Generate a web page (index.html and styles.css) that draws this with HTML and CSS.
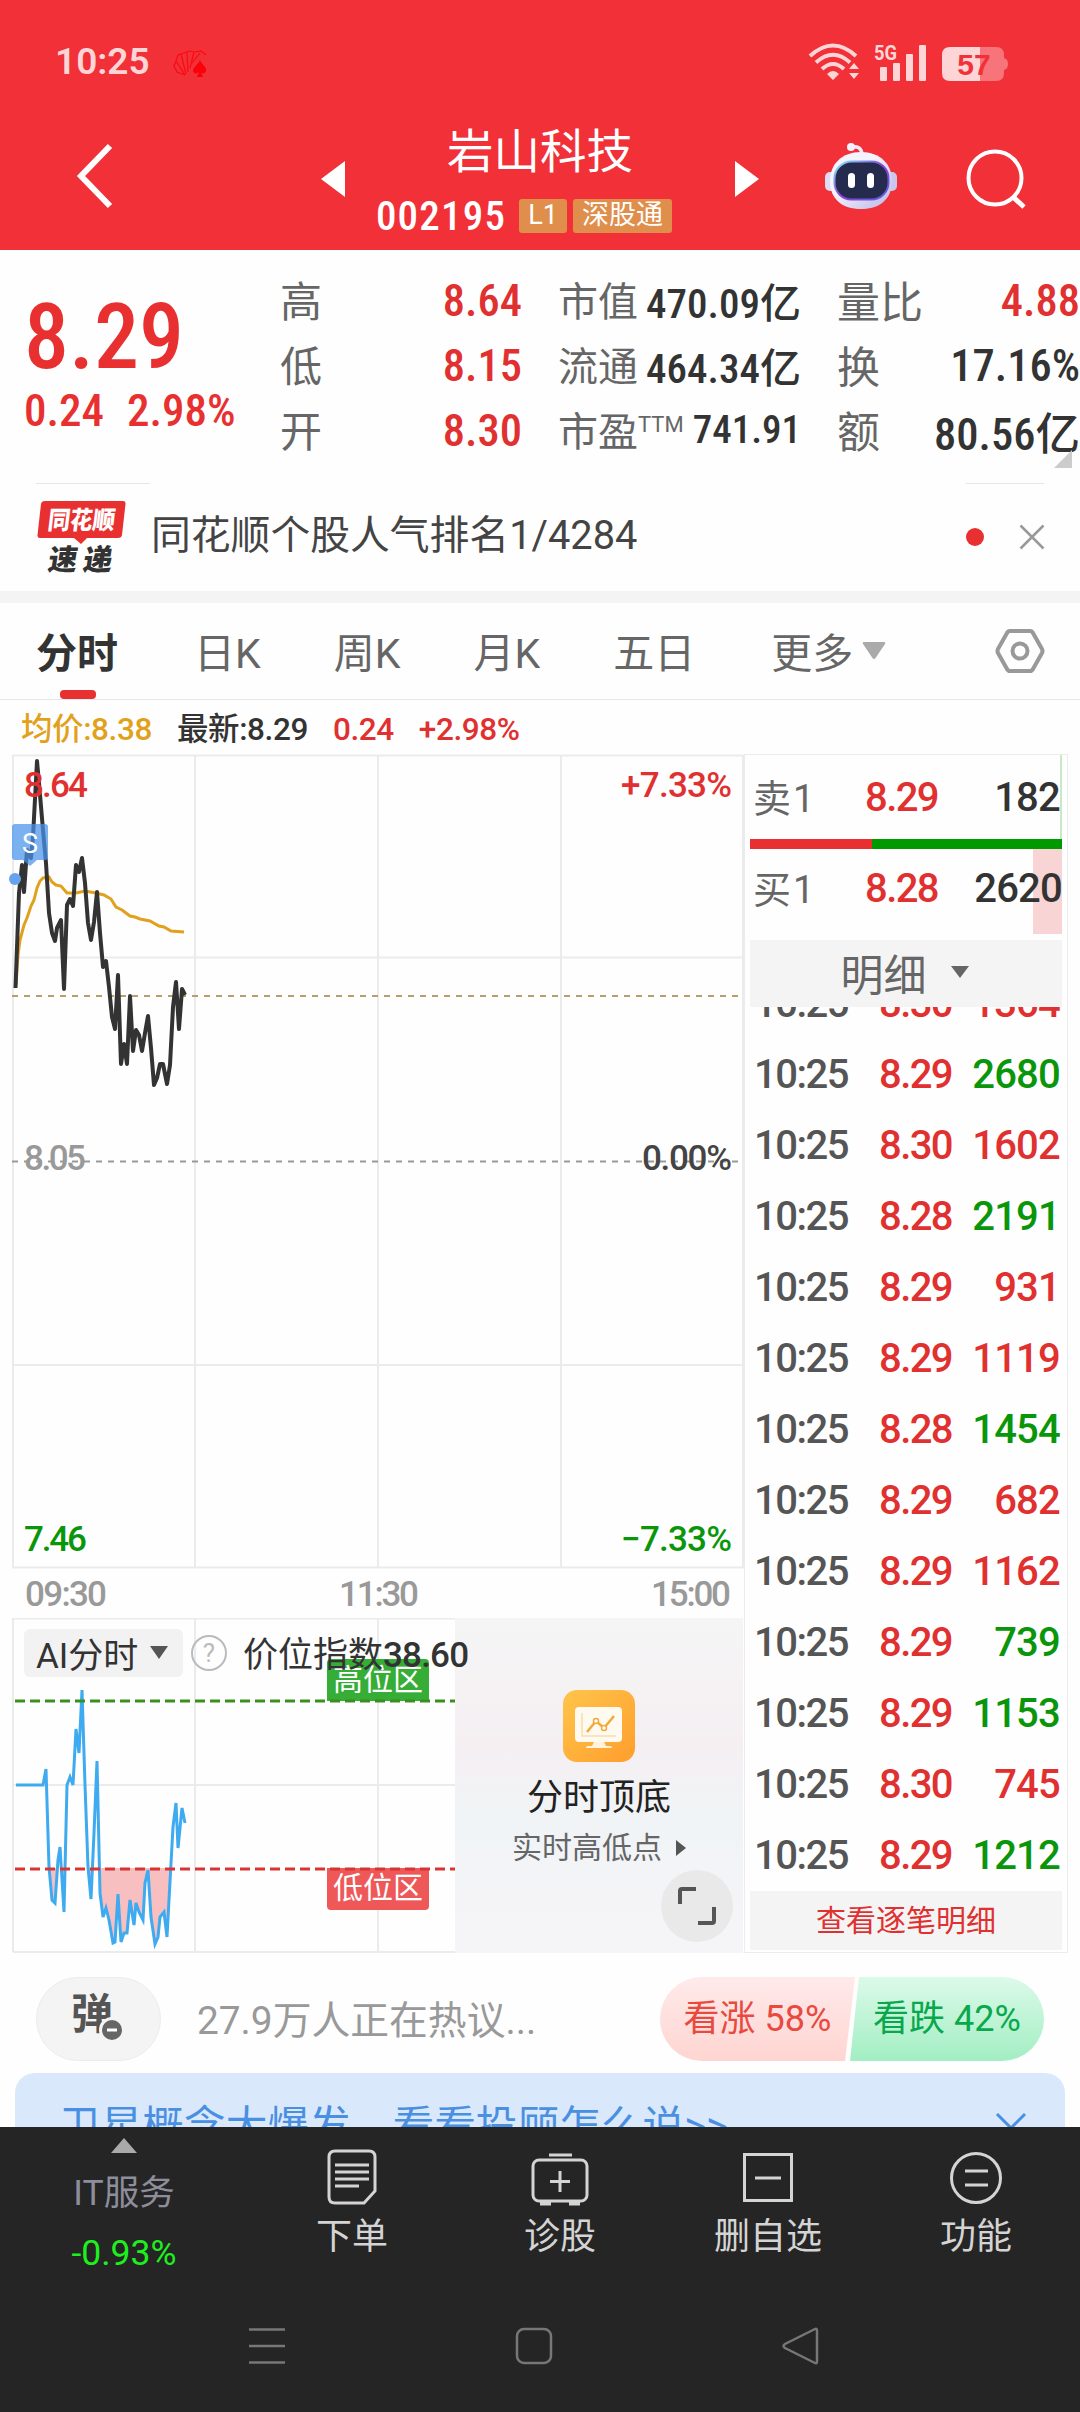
FILE: index.html
```html
<!DOCTYPE html>
<html lang="zh-CN">
<head>
  <meta charset="UTF-8" />
  <meta name="viewport" content="width=device-width, initial-scale=1.0"/>
  <title>岩山科技 002195</title>
  <link rel="stylesheet" href="styles.css">
</head>
<body>

  <!-- Header -->
  <header class="top">
    <div class="status">
      <span class="clock">10:25</span>
      <svg class="shell" width="36" height="28" viewBox="0 0 36 28">
        <path d="M12 25 L4 22 L1 16 L3 11 L5 5 L11 3 L16 1 L22 2 L28 1 L33 5 M12 25 L3 11 M13 24 L8 4 M15 22 L14 2 M17 18 L21 2 M19 13 L27 3" fill="none" stroke="#fb0a10" stroke-width="1.2"/>
        <path d="M27 10 C29 15 34 17 33 21 C32 24 29 24 28 22 L30 27 H24 L26 22 C24 24 21 24 20 21 C20 17 25 15 27 10Z" fill="#fb0008"/>
      </svg>
      <svg class="wifi" width="52" height="38" viewBox="0 0 52 38">
        <g fill="none" stroke="#fdd5d7" stroke-width="4">
          <path d="M2 13 Q25 -8 48 13"/>
          <path d="M8 19.500 Q25 4 42 19.500"/>
          <path d="M14 26 Q25 16 36 26"/>
        </g>
        <path d="M19 31 Q25 25 31 31 L25 37Z M41 26 L46 20 L51 26Z M41 30 H51 L46 36Z" fill="#fdd5d7"/>
      </svg>
      <svg class="signal" width="54" height="38" viewBox="0 0 54 38">
        <text class="net" x="0" y="17" textLength="23" lengthAdjust="spacingAndGlyphs">5G</text>
        <g fill="#fdd5d7">
          <rect x="6" y="24" width="7" height="14" rx="1"/>
          <rect x="19" y="20" width="7" height="18" rx="1"/>
          <rect x="32" y="11" width="7" height="27" rx="1"/>
          <rect x="45" y="2" width="7" height="36" rx="1"/>
        </g>
      </svg>
      <svg class="battery" width="66" height="34" viewBox="0 0 66 34">
        <path d="M38 0 H54 Q62 0 62 8 V11 Q66 12 66 17 Q66 22 62 23 V26 Q62 34 54 34 H38Z" fill="#f7757a"/>
        <path d="M8 0 H38 V34 H8 Q0 34 0 26 V8 Q0 0 8 0Z" fill="#fdd5d7"/>
        <text class="percent" x="32" y="28" text-anchor="middle">57</text>
      </svg>
    </div>

    <div class="titlebar">
      <svg class="back" width="40" height="66" viewBox="0 0 40 66"><path d="M35 3 L6 33 L35 63" fill="none" stroke="#fff" stroke-width="6"/></svg>
      <svg class="prev" width="24" height="36" viewBox="0 0 24 36"><path d="M24 0 V36 L0 18Z" fill="#fff"/></svg>
      <div class="stock">
        <h1>岩山科技</h1>
        <div class="code"><span class="num">002195</span><i class="l1">L1</i><i>深股通</i></div>
      </div>
      <svg class="next" width="24" height="36" viewBox="0 0 24 36"><path d="M0 0 V36 L24 18Z" fill="#fff"/></svg>
      <svg class="robot" width="74" height="68" viewBox="0 0 74 68">
        <defs>
          <linearGradient id="head" x1="0" y1="0" x2="1" y2="1"><stop offset="0.4" stop-color="#f5f3fd"/><stop offset="1" stop-color="#b9b4e6"/></linearGradient>
          <linearGradient id="rim" x1="0" y1="0" x2="1" y2="1"><stop offset="0" stop-color="#7ff0f5"/><stop offset="0.500" stop-color="#8a3fd8"/><stop offset="1" stop-color="#5a62d8"/></linearGradient>
        </defs>
        <path d="M27 5 Q37 3 38 12" fill="none" stroke="#ecebfa" stroke-width="3.500"/>
        <circle cx="27" cy="5" r="4" fill="#f4f2fe"/>
        <rect x="1" y="30" width="12" height="19" rx="5" fill="#dedcf5"/>
        <rect x="61" y="30" width="12" height="19" rx="5" fill="#cac6ee"/>
        <path d="M37 10 C56 10 68 22 68 39 C68 57 56 67 37 67 C18 67 6 57 6 39 C6 22 18 10 37 10Z" fill="url(#head)"/>
        <rect x="10.500" y="19.500" width="54" height="38" rx="17" fill="#242b4c" stroke="url(#rim)" stroke-width="2"/>
        <rect x="24" y="31" width="7" height="15" rx="3.500" fill="#fff"/>
        <rect x="43" y="31" width="7" height="15" rx="3.500" fill="#fff"/>
      </svg>
      <svg class="search" width="62" height="62" viewBox="0 0 62 62"><g fill="none" stroke="#fff" stroke-width="4"><circle cx="29" cy="30" r="26.500"/><path d="M47 49 L58 59" stroke-width="5"/></g></svg>
    </div>
  </header>

  <!-- Quote -->
  <section class="quote">
    <div class="price">
      <div class="now num">8.29</div>
      <div class="change num"><span>0.24</span><span>2.98%</span></div>
    </div>
    <dl class="col-a">
      <dt>高</dt><dd class="num up">8.64</dd>
      <dt>低</dt><dd class="num up">8.15</dd>
      <dt>开</dt><dd class="num up">8.30</dd>
    </dl>
    <dl class="col-b">
      <dt>市值</dt><dd class="num">470.09亿</dd>
      <dt>流通</dt><dd class="num">464.34亿</dd>
      <dt>市盈<sup>TTM</sup></dt><dd class="num pe">741.91</dd>
    </dl>
    <dl class="col-c">
      <dt>量比</dt><dd class="num up">4.88</dd>
      <dt>换</dt><dd class="num">17.16%</dd>
      <dt>额</dt><dd class="num">80.56亿</dd>
    </dl>
    <i class="corner"></i>
  </section>

  <!-- News -->
  <section class="news">
    <div class="rules"><i></i><i></i></div>
    <div class="news-row">
      <svg class="logo" width="90" height="72" viewBox="0 0 90 72">
        <path d="M8 0 H86 Q89 0 88.500 3 L85 34 Q84.500 37 81 37 H50 L44 43 L37 37 H3 Q0 37 0.500 34 L4 3 Q4.500 0 8 0Z" fill="#e93030"/>
        <text class="brand" x="0" y="0" transform="translate(10 28) skewX(-7)" textLength="67" lengthAdjust="spacingAndGlyphs">同花顺</text>
        <text class="express" x="0" y="0" transform="translate(10 69) skewX(-9)" textLength="64">速递</text>
      </svg>
      <p>同花顺个股人气排名1/4284</p>
      <i class="dot"></i>
      <svg width="26" height="26" viewBox="0 0 26 26"><path d="M1.500 1.500 L24.500 24.500 M24.500 1.500 L1.500 24.500" stroke="#999" stroke-width="2.500"/></svg>
    </div>
  </section>

  <!-- Tabs -->
  <nav class="tabs">
    <span class="active">分时</span>
    <span>日K</span>
    <span>周K</span>
    <span>月K</span>
    <span>五日</span>
    <span class="more">更多</span>
    <svg class="caret" width="24" height="18" viewBox="0 0 24 18"><path d="M2 0 H22 Q24 0 23 2 L13.500 16 Q12 18 10.500 16 L1 2 Q0 0 2 0Z" fill="#aaa"/></svg>
    <svg class="hex" width="50" height="46" viewBox="0 0 50 46"><g fill="none" stroke="#999" stroke-width="4"><path d="M15 3 H35 Q37 3 38 5 L47 21 Q48 23 47 25 L38 41 Q37 43 35 43 H15 Q13 43 12 41 L3 25 Q2 23 3 21 L12 5 Q13 3 15 3Z"/><circle cx="25" cy="23" r="7.500"/></g></svg>
  </nav>

  <main class="board">
    <div class="charts">
      <div class="legend">
        <span class="avg">均价:8.38</span><span>最新:8.29</span><span class="up">0.24</span><span class="up">+2.98%</span>
      </div>

      <!-- intraday line -->
      <svg class="line" width="744" height="864" viewBox="0 754 744 864">
        <g class="grid">
          <rect x="13" y="755.500" width="730" height="812"/>
          <path d="M195 755 V1568 M378 755 V1568 M561 755 V1568 M13 957.500 H743 M13 1365 H743"/>
        </g>
        <path d="M12 996 H743" stroke="#b5a06c" stroke-width="2" stroke-dasharray="6 6"/>
        <path d="M12 1161.500 H743" stroke="#999" stroke-width="2" stroke-dasharray="6 6"/>
        <polyline fill="none" stroke="#e2a11c" stroke-width="3" points="16,985 17,970 18,955 20,940 24,925 27,918 31,906 34,900 37,888 40,881 43,878 49,877 52,882 56,885 61,886 67,893 76,893 85,891 96,893 104,895 111,899 116,907 122,910 130,916 135,917 140,919 150,921 159,926 164,927 171,931 184,932"/>
        <polyline fill="none" stroke="#333" stroke-width="4" stroke-linejoin="round" points="15.500,988 19,893 22,865 24,892 27,850 31,858 33,837 37,761 39,783 43,830 46,863 49,913 52,933 55,941 57,928 61,920 64,989 67,905 70,899 73,906 76,865 79,872 82,858 85,883 88,923 91,940 94,922 97,892 100,933 103,967 106,961 109,987 112,1017 115,1029 118,975 121,1064 124,1044 127,1064 130,996 133,1051 136,1030 139,1035 142,1051 145,1033 148,1016 151,1048 154,1085 157,1078 160,1064 163,1064 167,1084 170,1065 173,1007 176,982 179,1029 182,989 185,995"/>
        <g class="axis">
          <text x="24" y="797" fill="#e03030" textLength="64">8.64</text>
          <text x="621" y="797" fill="#e03030" textLength="111">+7.33%</text>
          <text x="24" y="1170" fill="#999" textLength="62">8.05</text>
          <text x="642" y="1170" fill="#444" textLength="90">0.00%</text>
          <text x="24" y="1551" fill="#0a960a" textLength="63">7.46</text>
          <text x="621" y="1551" fill="#0a960a" textLength="111">−7.33%</text>
          <text x="25" y="1606" fill="#999" textLength="82">09:30</text>
          <text x="339" y="1606" fill="#999" textLength="80">11:30</text>
          <text x="651" y="1606" fill="#999" textLength="80">15:00</text>
        </g>
        <path d="M15 824 H45 Q48 824 48 827 V857 Q48 860 45 860 H37 L30 866 L23 860 H15 Q12 860 12 857 V827 Q12 824 15 824Z" fill="#4a93ec" fill-opacity="0.720"/>
        <text class="sell" x="30" y="853" text-anchor="middle">S</text>
        <circle cx="15" cy="879" r="6" fill="#66a3ee"/>
      </svg>

      <!-- AI index -->
      <div class="ai">
        <svg class="ai-line" width="455" height="336" viewBox="0 1618 455 336">
          <defs><clipPath id="low"><rect x="0" y="1868" width="455" height="90"/></clipPath></defs>
          <g class="grid">
            <path d="M13 1618.500 H455 M13 1785 H455 M13 1952 H455 M13 1618 V1952 M195 1618 V1952 M378 1618 V1952"/>
          </g>
          <polygon clip-path="url(#low)" fill="#f7bfc0" points="46,1769 49,1867 52,1900 55,1903 58,1860 60,1847 64,1912 67,1785 85,1785 88,1867 91,1899 94,1833 97,1761 100,1893 103,1917 106,1908 109,1920 113,1943 115,1942 118,1894 121,1942 124,1933 127,1933 130,1900 134,1925 136,1903 139,1912 143,1920 145,1883 148,1870 151,1917 155,1944 158,1937 160,1917 164,1912 167,1937 169,1900 173,1827"/>
          <polyline fill="none" stroke="#3eaaf0" stroke-width="3" points="16,1785 43,1785 46,1769 49,1867 52,1900 55,1903 58,1860 60,1847 64,1912 67,1785 70,1777 73,1785 76,1729 79,1753 82,1690 85,1785 88,1867 91,1899 94,1833 97,1761 100,1893 103,1917 106,1908 109,1920 113,1943 115,1942 118,1894 121,1942 124,1933 127,1933 130,1900 134,1925 136,1903 139,1912 143,1920 145,1883 148,1870 151,1917 155,1944 158,1937 160,1917 164,1912 167,1937 169,1900 173,1827 176,1803 178,1848 182,1808 185,1823"/>
          <path d="M327 1701 V1663 Q327 1659 331 1659 H425 Q429 1659 429 1663 V1701Z" fill="#36ad36"/>
          <path d="M327 1868 V1906 Q327 1910 331 1910 H425 Q429 1910 429 1906 V1868Z" fill="#ee5858"/>
          <path d="M15 1701 H455" stroke="#3a8f1e" stroke-width="3" stroke-dasharray="10 5"/>
          <path d="M15 1869 H455" stroke="#d93434" stroke-width="3" stroke-dasharray="10 5"/>
          <text class="zone" x="378" y="1690" text-anchor="middle">高位区</text>
          <text class="zone" x="378" y="1898" text-anchor="middle">低位区</text>
        </svg>
        <div class="ai-head">
          <span class="picker">AI分时<svg width="20" height="13" viewBox="0 0 20 13"><path d="M1 0 H19 L10 13Z" fill="#555"/></svg></span>
          <span class="help">?</span>
          <span class="index">价位指数<b>38.60</b></span>
        </div>
        <div class="promo">
          <svg width="72" height="72" viewBox="0 0 72 72">
            <defs><linearGradient id="gold" x1="0" y1="0" x2="1" y2="1"><stop offset="0" stop-color="#ffc54a"/><stop offset="1" stop-color="#ff9d2e"/></linearGradient></defs>
            <rect width="72" height="72" rx="14" fill="url(#gold)"/>
            <rect x="12" y="17" width="47" height="35" rx="4" fill="#fffaf0"/>
            <path d="M31 52 H41 L43 56 H47 Q49 56 49 58 H23 Q23 56 25 56 H29Z" fill="#fff3dd"/>
            <path d="M19 23 V46 H53" fill="none" stroke="#fbdcae" stroke-width="1.500"/>
            <path d="M24 42 L33 31 L41 38 L51 26" fill="none" stroke="#f0a93a" stroke-width="2.500"/>
            <circle cx="33" cy="31" r="2.500" fill="#fff" stroke="#f0a93a" stroke-width="1.500"/>
            <circle cx="41" cy="38" r="2.500" fill="#fff" stroke="#f0a93a" stroke-width="1.500"/>
          </svg>
          <strong>分时顶底</strong>
          <span>实时高低点<svg width="10" height="18" viewBox="0 0 10 18"><path d="M0 1 L10 9 L0 17Z" fill="#555"/></svg></span>
          <i class="expand"><svg width="40" height="40" viewBox="0 0 40 40"><path d="M3 18 V5 Q3 3 5 3 H19 M37 21 V35 Q37 37 35 37 H21" fill="none" stroke="#555" stroke-width="4"/></svg></i>
        </div>
      </div>
    </div>

    <!-- Order book and ticks -->
    <aside class="book">
      <div class="level sell1"><span>卖1</span><b class="up">8.29</b><b>182</b></div>
      <div class="ratio"><i></i></div>
      <div class="level buy1"><span>买1</span><b class="up">8.28</b><b>2620</b></div>
      <div class="detail">明细<svg width="18" height="12" viewBox="0 0 18 12"><path d="M0 0 H18 L9 12Z" fill="#666"/></svg></div>
      <div class="ticks">
        <p class="cut"><span>10:25</span><b>8.30</b><b>1364</b></p>
        <p><span>10:25</span><b>8.29</b><b class="down">2680</b></p>
        <p><span>10:25</span><b>8.30</b><b>1602</b></p>
        <p><span>10:25</span><b>8.28</b><b class="down">2191</b></p>
        <p><span>10:25</span><b>8.29</b><b>931</b></p>
        <p><span>10:25</span><b>8.29</b><b>1119</b></p>
        <p><span>10:25</span><b>8.28</b><b class="down">1454</b></p>
        <p><span>10:25</span><b>8.29</b><b>682</b></p>
        <p><span>10:25</span><b>8.29</b><b>1162</b></p>
        <p><span>10:25</span><b>8.29</b><b class="down">739</b></p>
        <p><span>10:25</span><b>8.29</b><b class="down">1153</b></p>
        <p><span>10:25</span><b>8.30</b><b>745</b></p>
        <p><span>10:25</span><b>8.29</b><b class="down">1212</b></p>
      </div>
      <div class="all">查看逐笔明细</div>
    </aside>
  </main>

  <!-- Discussion -->
  <section class="talk">
    <span class="danmu">弹<svg width="26" height="26" viewBox="0 0 26 26"><circle cx="13" cy="13" r="11.500" fill="#666" stroke="#f4f4f4" stroke-width="3"/><path d="M8 13 H18" stroke="#fff" stroke-width="3"/></svg></span>
    <p>27.9万人正在热议...</p>
    <div class="vote"><span class="bull">看涨 58%</span><span class="bear">看跌 42%</span></div>
  </section>
  <section class="banner">
    <div class="banner-box">
      <p>卫星概念大爆发，看看投顾怎么说&gt;&gt;</p>
      <svg width="32" height="32" viewBox="0 0 32 32"><path d="M2 2 L30 30 M30 2 L2 30" stroke="#4a90e2" stroke-width="3"/></svg>
    </div>
  </section>

  <!-- Bottom bar -->
  <footer>
    <div class="actions">
      <div class="sector"><i></i><span>IT服务</span><em>-0.93%</em></div>
      <div class="action">
        <svg width="60" height="60" viewBox="0 0 60 60"><g fill="none" stroke="#d4d4d4" stroke-width="3"><path d="M13 4 H47 Q53 4 53 10 V44 L42 56 H13 Q7 56 7 50 V10 Q7 4 13 4Z"/><path d="M13 18 H47 M13 25 H47 M13 32 H47 M13 39 H37"/></g></svg>
        <span>下单</span>
      </div>
      <div class="action">
        <svg width="60" height="60" viewBox="0 0 60 60"><g fill="none" stroke="#d4d4d4" stroke-width="3"><path d="M19 8 H42"/><rect x="3" y="13" width="54" height="41" rx="6"/><path d="M30 24 V45 M20 34.500 H40"/><path d="M10 56 H21 M39 56 H50" stroke-width="5"/></g></svg>
        <span>诊股</span>
      </div>
      <div class="action">
        <svg width="60" height="60" viewBox="0 0 60 60"><g fill="none" stroke="#d4d4d4" stroke-width="3"><rect x="6.500" y="7.500" width="47" height="46"/><path d="M17 31 H43"/></g></svg>
        <span>删自选</span>
      </div>
      <div class="action">
        <svg width="60" height="60" viewBox="0 0 60 60"><g fill="none" stroke="#d4d4d4" stroke-width="3"><circle cx="30" cy="31" r="24.500"/><path d="M19 24 H42 M19 38 H42"/></g></svg>
        <span>功能</span>
      </div>
    </div>
    <div class="sysnav">
      <svg width="38" height="38" viewBox="0 0 38 38"><path d="M1 2.500 H37 M1 19 H37 M1 35.500 H37" stroke="#777" stroke-width="2.500"/></svg>
      <svg width="38" height="38" viewBox="0 0 38 38"><rect x="2" y="2" width="34" height="34" rx="7" fill="none" stroke="#777" stroke-width="2.500"/></svg>
      <svg width="38" height="38" viewBox="0 0 38 38"><path d="M33 2 Q35 1 35 4 V34 Q35 37 33 36 L3 21 Q0 19 3 17Z" fill="none" stroke="#777" stroke-width="2.500"/></svg>
    </div>
  </footer>

</body>
</html>
```
FILE: styles.css
```css
* {
  box-sizing: border-box;
}

body {
  margin: 0;
  width: 1080px;
  height: 2412px;
  overflow: hidden;
  background: #fefefe;
  font-family: Roboto, 'Noto Sans CJK SC', sans-serif;
  color: #333;
}

h1, p, dl, dd { margin: 0; }
i, em { font-style: normal; }
svg { display: block; flex: none; }

.num {
  font-stretch: 75%;
  font-weight: 500;
}

.up { color: #e03030; }
.down { color: #0a960a; }

/* header */
.top {
  height: 250px;
  background: #f13038;
  color: #fff;
}

.status {
  height: 120px;
  padding: 3px 72px 0 55px;
  display: flex;
  align-items: center;
}

.clock {
  font-size: 37px;
  font-weight: 600;
  color: #fdd5d7;
}

.shell { margin-left: 23px; margin-top: 5px; }
.wifi { margin-left: auto; }
.signal { margin-left: 14px; }
.battery { margin-left: 14px; margin-top: 4px; }
.net { font: bold 20px Roboto, sans-serif; fill: #fdd5d7; }
.percent { font: bold 30px 'Liberation Sans', sans-serif; fill: #f13038; }

.titlebar {
  height: 130px;
  display: flex;
  align-items: flex-start;
}

.back { margin: 23px 0 0 75px; }
.prev { margin: 41px 0 0 206px; }

.stock {
  width: 390px;
  text-align: center;
}

.stock h1 {
  height: 68px;
  line-height: 64px;
  font-size: 46.5px;
  font-weight: 400;
}

.code {
  display: flex;
  align-items: center;
  height: 56px;
  padding-left: 29px;
  font-size: 41px;
}

.code .num {
  margin-right: 11px;
  width: 134px;
  letter-spacing: 1.2px;
}

.code i {
  height: 34px;
  line-height: 33px;
  padding: 0 9px;
  margin-right: 6px;
  border-radius: 3px;
  background: #e08e4b;
  font-size: 27px;
}

.code .l1 { width: 48px; padding: 0; }

.next { margin-top: 41px; }
.robot { margin: 22px 0 0 65px; }
.search { margin: 28px 0 0 68px; }

/* quote */
.quote {
  position: relative;
  height: 233px;
  padding-top: 18px;
  display: flex;
}

.price {
  width: 280px;
  padding-left: 24px;
  color: #e93030;
}

.now {
  height: 115px;
  padding-top: 18px;
  line-height: 104px;
  font-size: 90px;
}

.change {
  display: flex;
  gap: 23px;
  padding-top: 2px;
  line-height: 52px;
  font-size: 45px;
}

dl {
  display: grid;
  grid-template-columns: auto 1fr;
  grid-auto-rows: 65px;
  align-items: center;
  white-space: nowrap;
}

dt { padding-bottom: 4px; font-size: 42px; color: #666; }
dd { font-size: 44.5px; text-align: right; }
sup { font-size: 22px; line-height: 0; }
.col-a { width: 242px; }
.col-b { grid-template-columns: 80px 1fr; width: 243px; margin-left: 36px; }
.col-b dt { font-size: 40px; }
.col-b dd { font-size: 41px; padding-bottom: 2px; }
.col-b .pe { font-size: 39px; }
.col-c { width: 243px; margin-left: 36px; }
.col-c dt { font-size: 43px; }

.corner {
  position: absolute;
  right: 8px;
  bottom: 15px;
  border-left: 18px solid transparent;
  border-bottom: 18px solid #ccc;
}

/* news */
.news {
  height: 120px;
  border-bottom: 12px solid #f4f4f4;
}

.rules {
  display: flex;
  justify-content: space-between;
  padding: 0 36px;
}

.rules i { width: 114px; height: 1px; background: #e6e6e6; }
.rules i:last-child { width: 78px; }

.news-row {
  display: flex;
  align-items: center;
  height: 106px;
  padding: 0 35px 0 37px;
}

.news-row p {
  flex: 1;
  padding: 0 0 11px 24px;
  font-size: 39.8px;
  color: #444;
}

.brand { font: 900 25px 'Noto Sans CJK SC', sans-serif; fill: #fff; }
.express { font: 900 29px 'Noto Sans CJK SC', sans-serif; fill: #333; }

.dot {
  width: 18px;
  height: 18px;
  margin-right: 35px;
  border-radius: 50%;
  background: #e93030;
}

/* tabs */
.tabs {
  display: flex;
  align-items: center;
  height: 97px;
  border-bottom: 1px solid #e8e8e8;
  padding-left: 36px;
  font-size: 41px;
  color: #666;
}

.tabs span { margin-right: 73px; padding-bottom: 2px; }

.tabs .active {
  position: relative;
  margin-right: 76px;
  font-weight: 700;
  color: #333;
}

.active::after {
  content: '';
  position: absolute;
  left: 24px;
  bottom: -17px;
  width: 36px;
  height: 9px;
  border-radius: 4px;
  background: #e93030;
}

.tabs .more { margin: 0 9px 0 3px; }
.hex { margin-left: 109px; }

/* charts */
.board {
  display: flex;
  height: 1253px;
}

.charts { width: 744px; }

.legend {
  display: flex;
  gap: 25px;
  height: 54px;
  line-height: 60px;
  padding-left: 21px;
  font-size: 31.5px;
  font-weight: 500;
  letter-spacing: -0.4px;
}

.legend .avg { color: #e2a11c; }
.grid { fill: none; stroke: #ebebeb; stroke-width: 2; }
.axis { font-size: 35px; font-weight: 500; }
.sell { font: 27px Roboto, sans-serif; fill: #fff; }
.zone { font: 30px 'Noto Sans CJK SC', sans-serif; fill: #fff; }

.ai {
  position: relative;
  display: flex;
}

.ai-head {
  position: absolute;
  top: 11px;
  left: 24px;
  z-index: 1;
  display: flex;
  align-items: center;
  height: 48px;
  white-space: nowrap;
  font-size: 35px;
}

.picker {
  display: flex;
  align-items: center;
  gap: 11px;
  width: 159px;
  height: 48px;
  padding: 0 0 2px 12px;
  border-radius: 6px;
  background: #f2f2f2;
}

.help {
  width: 36px;
  height: 36px;
  margin: 0 16px 0 8px;
  border: 2px solid #bbb;
  border-radius: 50%;
  text-align: center;
  line-height: 32px;
  font-size: 26px;
  color: #bbb;
}

.index { padding-bottom: 3px; }
.index b { font-weight: 500; letter-spacing: -0.8px; }

.promo {
  position: relative;
  width: 288px;
  height: 335px;
  padding-top: 72px;
  display: flex;
  flex-direction: column;
  align-items: center;
  background: linear-gradient(180deg, #f5f5f6, #f5eff2 38%, #f0f4f6 60%, #f5f4f7 90%);
}

.promo strong {
  margin-top: 9px;
  line-height: 54px;
  font-size: 36px;
  font-weight: 400;
  color: #222;
}

.promo span {
  display: flex;
  align-items: center;
  gap: 14px;
  line-height: 46px;
  font-size: 30px;
  color: #666;
}

.expand {
  position: absolute;
  right: 10px;
  bottom: 11px;
  width: 72px;
  height: 72px;
  padding: 16px;
  border-radius: 50%;
  background: #e9e9e9;
}

/* order book */
.book {
  width: 324px;
  height: 1199px;
  margin-top: 54px;
  padding: 0 5px;
  border: 1px solid #ececec;
  font-size: 38px;
}

.book b {
  font-size: 40px;
  font-weight: 500;
  letter-spacing: -1.6px;
  text-align: right;
}

.book b:last-child { letter-spacing: -0.8px; }

.book .level {
  display: grid;
  grid-template-columns: 60px 125px 1fr;
  align-items: center;
  height: 84px;
  padding: 0 0 0 3px;
  border-right: 2px solid #c8e9c8;
  color: #333;
}

.book .level span {
  padding-bottom: 4px;
  letter-spacing: 2px;
  color: #666;
  white-space: nowrap;
}

.book .level .up { color: #e03030; }

.book .buy1 {
  height: 85px;
  padding-bottom: 7px;
  border-right: 0;
  background: linear-gradient(#f9d4d5, #f9d4d5) right / 29px no-repeat;
}

.ratio { height: 10px; background: #009900; }
.ratio i { display: block; width: 122px; height: 10px; background: #e93030; }

.detail {
  display: flex;
  align-items: center;
  justify-content: center;
  gap: 24px;
  height: 67px;
  margin-top: 6px;
  padding: 0 3px 3px 0;
  background: #f4f4f4;
  font-size: 43px;
  color: #666;
}

.ticks {
  height: 884px;
  overflow: hidden;
}

.ticks p {
  display: grid;
  grid-template-columns: 98px 100px 1fr;
  align-items: center;
  height: 71px;
  padding: 0 2px 0 4px;
  color: #e03030;
}

.ticks .cut { margin-top: -39px; }
.ticks span { color: #555; font-size: 40px; font-weight: 500; letter-spacing: -1.5px; }
.ticks .down { color: #0a960a; }

.all {
  height: 59px;
  line-height: 59px;
  background: #f4f4f4;
  text-align: center;
  font-size: 30px;
  color: #e03030;
}

/* discussion */
.talk {
  display: flex;
  align-items: center;
  height: 120px;
  padding: 12px 36px 0;
}

.danmu {
  position: relative;
  width: 125px;
  height: 84px;
  padding-left: 34px;
  border: 1px solid #ececec;
  border-radius: 42px;
  background: #f4f4f4;
  line-height: 74px;
  font-size: 42px;
  font-weight: 700;
  color: #555;
}

.danmu svg { position: absolute; left: 62px; top: 39px; }

.talk p {
  flex: 1;
  padding: 0 0 5px 36px;
  font-size: 38.8px;
  color: #999;
}

.vote {
  display: flex;
  height: 84px;
  line-height: 84px;
  font-size: 36px;
}

.vote span { text-align: center; white-space: nowrap; }

.bull {
  width: 195px;
  border-radius: 42px 0 0 42px;
  background: linear-gradient(#ffeaea, #fed5d1);
  clip-path: polygon(0 0, 100% 0, 185px 100%, 0 100%);
  color: #e84a40;
}

.bear {
  width: 194px;
  margin-left: -5px;
  border-radius: 0 42px 42px 0;
  background: linear-gradient(#dcfaea, #a2eec2);
  clip-path: polygon(9px 0, 100% 0, 100% 100%, 0 100%);
  color: #0aa84c;
}

.banner {
  height: 54px;
  padding: 0 15px;
  overflow: hidden;
}

.banner-box {
  display: flex;
  justify-content: space-between;
  height: 110px;
  padding: 24px 38px 0 44px;
  border-radius: 20px;
  background: #dae8fb;
  color: #4a90e2;
}

.banner p { line-height: 60px; font-size: 41.7px; }
.banner svg { margin-top: 15px; }

/* bottom bar */
footer {
  height: 285px;
  background: #252525;
  color: #d4d4d4;
}

.actions {
  display: flex;
  height: 160px;
}

.sector, .action {
  width: 208px;
  display: flex;
  flex-direction: column;
  align-items: center;
}

.sector { width: 248px; }

.sector i {
  margin-top: 11px;
  border: 13px solid transparent;
  border-top: 0;
  border-bottom: 15px solid #aaa;
}

.sector span, .sector em { line-height: 60px; font-size: 35.5px; }
.sector span { margin-top: 10px; color: #8d8d9b; }
.sector em { color: #1ef01e; }
.action svg { margin-top: 20px; }
.action span { line-height: 60px; font-size: 36px; }

.sysnav {
  display: flex;
  gap: 229px;
  padding: 40px 0 0 248px;
}
```
